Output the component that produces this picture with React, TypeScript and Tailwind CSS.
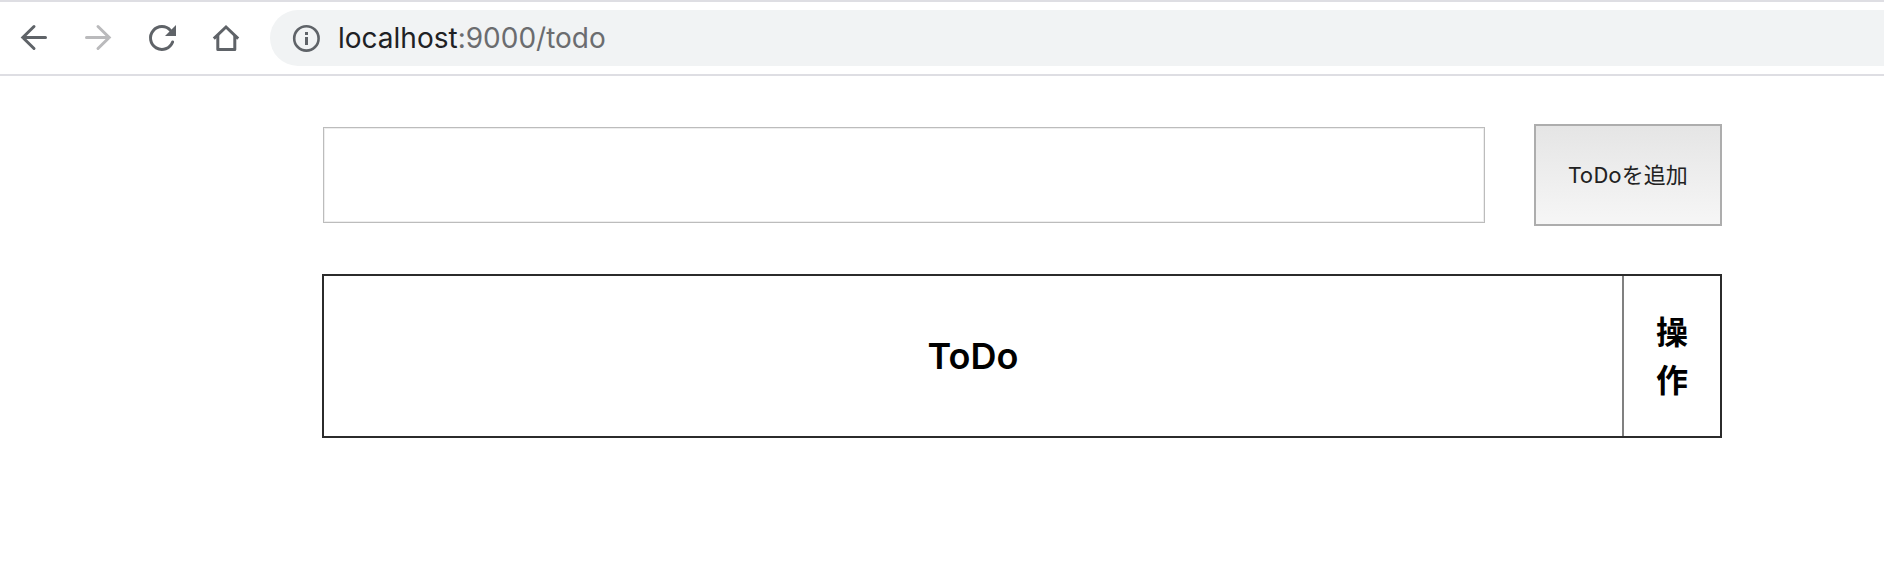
import { useState, type FormEvent, type ReactNode } from "react";

function ToolbarButton({ label, disabled, children }: { label: string; disabled?: boolean; children: ReactNode }) {
  return (
    <button
      type="button"
      aria-label={label}
      disabled={disabled}
      className="flex h-14 w-16 items-center justify-center text-[#5f6368] disabled:text-[#bababc]"
    >
      <svg className="size-8" viewBox="0 0 32 32" fill="none" stroke="currentColor" strokeWidth="3" aria-hidden="true">
        {children}
      </svg>
    </button>
  );
}

function BrowserBar() {
  return (
    <header className="flex items-center border-y-2 border-[#dedee3] bg-white py-2 pl-0.5">
      <nav className="mr-3 flex shrink-0" aria-label="Browser">
        <ToolbarButton label="Back">
          <path d="M16 4.5 4.8 15.5 16 26.5M5 15.5h22.5" strokeLinecap="round" />
        </ToolbarButton>
        <ToolbarButton label="Forward" disabled>
          <path d="M16 4.5 27.2 15.5 16 26.5M27 15.5H4.5" strokeLinecap="round" />
        </ToolbarButton>
        <ToolbarButton label="Reload">
          <path d="M26.6 20A11.4 11.4 0 1 1 24.6 8.6" strokeLinecap="round" />
          <path d="M30 3v11H19z" fill="currentColor" stroke="none" />
        </ToolbarButton>
        <ToolbarButton label="Home">
          <path d="M3.8 16.6 16 5l12.2 11.6" />
          <path d="M7.8 13v14.5h17V13" strokeLinejoin="round" />
        </ToolbarButton>
      </nav>
      <div className="flex h-14 min-w-0 flex-1 items-center gap-4 rounded-l-full bg-[#f1f3f4] pl-5">
        <button type="button" aria-label="Site information" className="text-[#5f6368]">
          <svg className="size-8" viewBox="0 0 32 32" fill="none" aria-hidden="true">
            <circle cx="16.4" cy="16.4" r="12.2" stroke="currentColor" strokeWidth="2.6" />
            <path d="M15 10h3v3h-3zM15 15h3v8h-3z" fill="currentColor" />
          </svg>
        </button>
        <p className="truncate font-['Inter',sans-serif] text-[28px] leading-9 text-[#6b6c6f]">
          <span className="text-[#202124]">localhost</span>:9000/todo
        </p>
      </div>
    </header>
  );
}

export default function App() {
  const [text, setText] = useState("");
  const [todos, setTodos] = useState<string[]>([]);

  const addTodo = (event: FormEvent) => {
    event.preventDefault();
    if (!text.trim()) return;
    setTodos([...todos, text.trim()]);
    setText("");
  };

  return (
    <div className="min-h-screen bg-white text-black">
      <BrowserBar />
      <main className="flex flex-col gap-12 py-12 pr-[162px] pl-[322px]">
        <form onSubmit={addTodo} className="flex items-center gap-12">
          <input
            type="text"
            aria-label="ToDo"
            value={text}
            onChange={(event) => setText(event.target.value)}
            className="mx-px h-24 min-w-0 flex-1 border border-[#bcbcbc] px-6 text-2xl shadow-[inset_0_0_0_1px_#eeeeee] outline-none"
          />
          <button
            type="submit"
            className="min-w-[188px] shrink-0 border-2 border-[#adadad] bg-linear-to-b from-[#e5e5e5] to-[#f6f6f6] px-7 pt-[30px] pb-[34px] font-['Noto_Sans_CJK_JP',sans-serif] text-[22px] leading-[34px] text-[#222222]"
          >
            ToDoを追加
          </button>
        </form>
        <table className="w-full border-separate border-spacing-0 border-2 border-[#2b2b2b]">
          <thead>
            <tr>
              <th className="p-8 font-['Inter','Noto_Sans_CJK_JP',sans-serif] text-4xl font-semibold">ToDo</th>
              <th className="w-[98px] border-l-2 border-[#808080] px-8 pt-[30px] pb-[34px] font-['Noto_Sans_CJK_JP',sans-serif] text-[32px] leading-[48px] font-bold">
                操作
              </th>
            </tr>
          </thead>
          <tbody>
            {todos.map((todo, index) => (
              <tr key={index}>
                <td className="border-t-2 border-[#808080] p-8 text-2xl">{todo}</td>
                <td className="border-t-2 border-l-2 border-[#808080] p-8 text-center">
                  <button
                    type="button"
                    aria-label="削除"
                    onClick={() => setTodos(todos.filter((_, i) => i !== index))}
                  >
                    ×
                  </button>
                </td>
              </tr>
            ))}
          </tbody>
        </table>
      </main>
    </div>
  );
}
